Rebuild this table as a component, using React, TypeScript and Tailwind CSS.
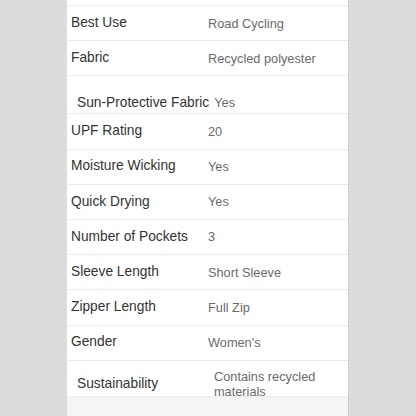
import React from 'react';

interface Spec {
  label: string;
  value: string;
}

const specs: Spec[] = [
  { label: 'UPF Rating', value: '20' },
  { label: 'Moisture Wicking', value: 'Yes' },
  { label: 'Quick Drying', value: 'Yes' },
  { label: 'Number of Pockets', value: '3' },
  { label: 'Sleeve Length', value: 'Short Sleeve' },
  { label: 'Zipper Length', value: 'Full Zip' },
  { label: 'Gender', value: "Women's" },
];

const SpecRow: React.FC<Spec> = ({ label, value }) => (
  <div className="flex h-[35.2px] items-center border-b border-[#ececec] pl-[4px]">
    <span className="w-[137px] shrink-0 text-[13.75px] text-[#333333]">{label}</span>
    <span className="text-[12.75px] text-[#6a6a6a]">{value}</span>
  </div>
);

const App: React.FC = () => {
  return (
    <div
      className="h-[416px] w-[416px] overflow-hidden bg-[#dcdcdc]"
      style={{ fontFamily: '"Liberation Sans", Arial, sans-serif' }}
    >
      <div className="mx-auto flex h-full w-[282px] flex-col border-r border-[#cfcfcf] bg-white">
        <div className="h-[6px] shrink-0 border-b border-[#ececec]" />
        <SpecRow label="Best Use" value="Road Cycling" />
        <SpecRow label="Fabric" value="Recycled polyester" />

        <div className="h-[38px] shrink-0 border-b border-[#ececec] pl-[10px] pt-[17.5px] leading-[16px]">
          <span className="text-[13.75px] text-[#333333]">Sun-Protective Fabric</span>
          <span className="ml-[5px] text-[12.75px] text-[#6a6a6a]">Yes</span>
        </div>

        {specs.map((s) => (
          <SpecRow key={s.label} label={s.label} value={s.value} />
        ))}

        <div className="h-[35.7px] shrink-0 overflow-hidden">
          <div className="flex items-center pl-[10px] pt-[8.5px]">
            <span className="w-[137px] shrink-0 text-[13.75px] text-[#333333]">Sustainability</span>
            <span className="w-[120px] text-[12.75px] leading-[15px] text-[#6a6a6a]">
              Contains recycled materials
            </span>
          </div>
        </div>

        <div className="flex-1 border-t border-[#ececec] bg-[#f4f4f4]" />
      </div>
    </div>
  );
};

export default App;
